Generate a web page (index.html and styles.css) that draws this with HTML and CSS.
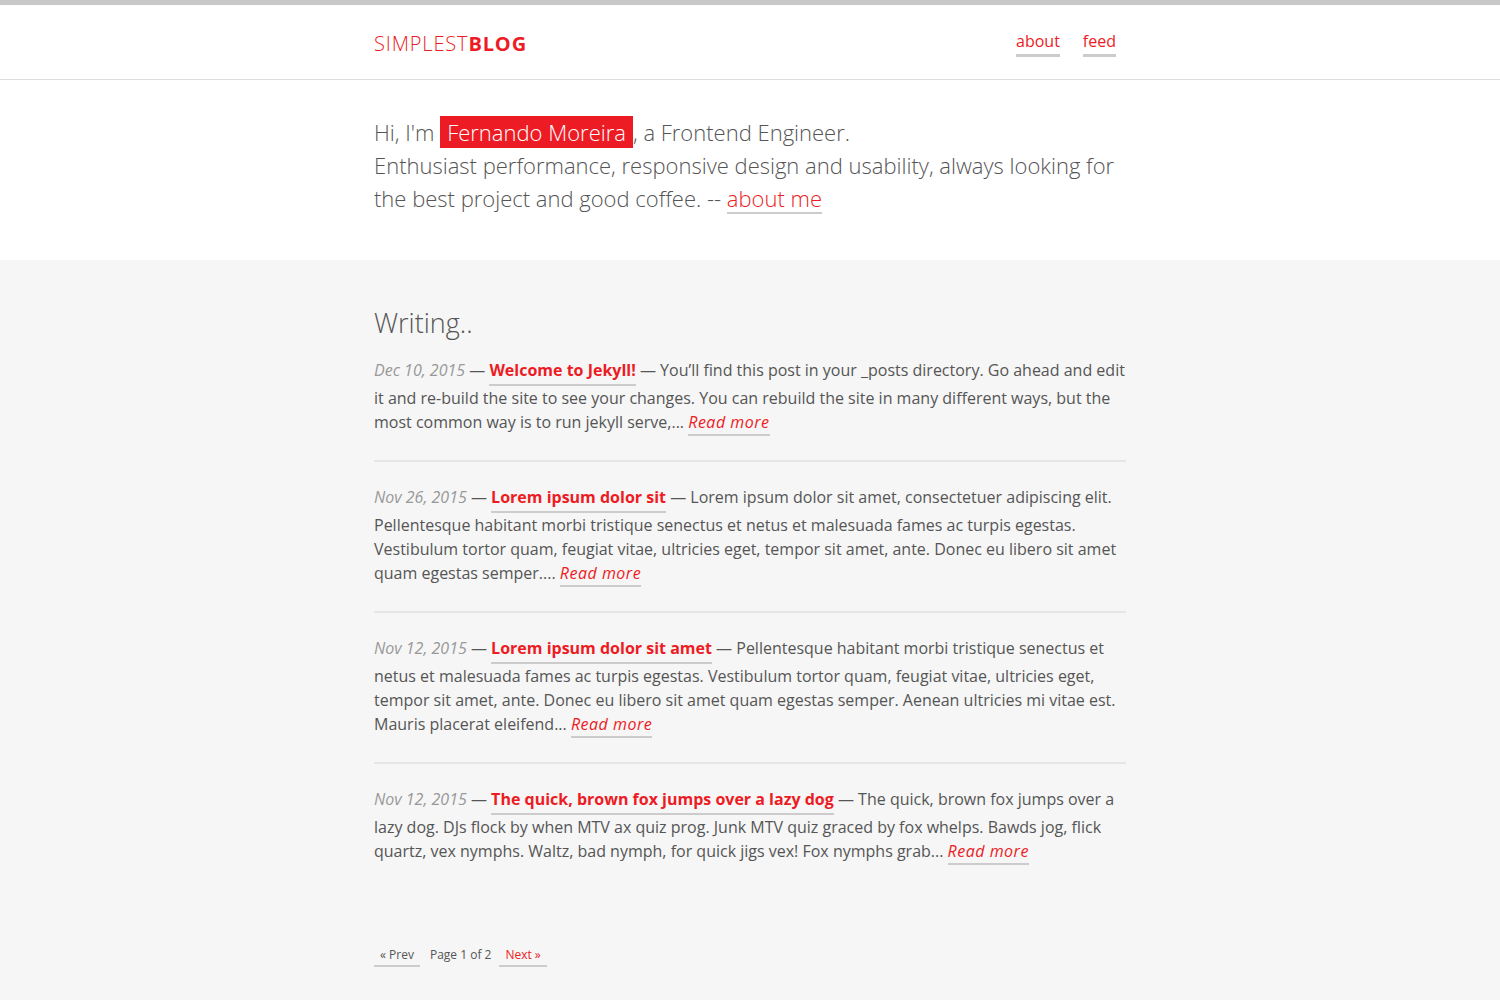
FILE: index.html
```html
<!DOCTYPE html>
<html lang="en">
<head>
<meta charset="utf-8">
<title>Simplest Blog</title>
<link rel="stylesheet" href="styles.css">
</head>
<body>
<header class="site-header">
  <div class="container header-inner">
    <a class="logo" href="#"><span class="logo-light">SIMPLEST</span><span class="logo-bold">BLOG</span></a>
    <nav class="nav">
      <a class="nav-link" href="#">about</a>
      <a class="nav-link" href="#">feed</a>
    </nav>
  </div>
</header>

<section class="hero">
  <div class="container">
    <p class="hero-text">Hi, I'm <span class="name">Fernando Moreira</span>, a Frontend Engineer.<br>Enthusiast performance, responsive design and usability, always looking for the best project and good coffee. -- <a class="hero-link" href="#">about me</a></p>
  </div>
</section>

<main class="content">
  <div class="container">
    <h2 class="section-title">Writing..</h2>

    <article class="post">
      <p class="post-text"><span class="date">Dec 10, 2015</span> — <a class="title" href="#">Welcome to Jekyll!</a> — You’ll find this post in your _posts directory. Go ahead and edit it and re-build the site to see your changes. You can rebuild the site in many different ways, but the most common way is to run jekyll serve,... <a class="more" href="#">Read more</a></p>
    </article>

    <article class="post">
      <p class="post-text"><span class="date">Nov 26, 2015</span> — <a class="title" href="#">Lorem ipsum dolor sit</a> — Lorem ipsum dolor sit amet, consectetuer adipiscing elit. Pellentesque habitant morbi tristique senectus et netus et malesuada fames ac turpis egestas. Vestibulum tortor quam, feugiat vitae, ultricies eget, tempor sit amet, ante. Donec eu libero sit amet quam egestas semper.... <a class="more" href="#">Read more</a></p>
    </article>

    <article class="post">
      <p class="post-text"><span class="date">Nov 12, 2015</span> — <a class="title" href="#">Lorem ipsum dolor sit amet</a> — Pellentesque habitant morbi tristique senectus et netus et malesuada fames ac turpis egestas. Vestibulum tortor quam, feugiat vitae, ultricies eget, tempor sit amet, ante. Donec eu libero sit amet quam egestas semper. Aenean ultricies mi vitae est. Mauris placerat eleifend... <a class="more" href="#">Read more</a></p>
    </article>

    <article class="post post-last">
      <p class="post-text"><span class="date">Nov 12, 2015</span> — <a class="title" href="#">The quick, brown fox jumps over a lazy dog</a> — The quick, brown fox jumps over a lazy dog. DJs flock by when MTV ax quiz prog. Junk MTV quiz graced by fox whelps. Bawds jog, flick quartz, vex nymphs. Waltz, bad nymph, for quick jigs vex! Fox nymphs grab... <a class="more" href="#">Read more</a></p>
    </article>

    <div class="pagination">
      <a class="page-link prev" href="#">« Prev</a>
      <span class="page-info">Page 1 of 2</span>
      <a class="page-link next" href="#">Next »</a>
    </div>
  </div>
</main>
</body>
</html>
```

FILE: styles.css
```css
* { box-sizing: border-box; }

html, body {
  margin: 0;
  padding: 0;
}

body {
  font-family: "Open Sans", "Liberation Sans", sans-serif;
  color: #555;
  background: #f6f6f6;
}

a { text-decoration: none; }

.container {
  width: 752px;
  margin: 0 auto;
}

.site-header {
  background: #fff;
  border-top: 5px solid #c8c8c8;
  border-bottom: 1px solid #ddd;
  height: 80px;
}

.header-inner {
  display: flex;
  align-items: center;
  justify-content: space-between;
  height: 74px;
  padding-top: 2px;
}

.logo {
  color: #ed1c24;
  font-size: 20px;
  letter-spacing: 0.85px;
  line-height: 1;
  margin-top: 2px;
}

.logo-light { font-weight: 300; }
.logo-bold { font-weight: 700; }

.nav {
  display: flex;
  gap: 23px;
  margin-right: 10px;
}

.nav-link {
  color: #ed1c24;
  font-size: 16px;
  line-height: 22px;
  border-bottom: 3px solid #ccc;
  padding-bottom: 2px;
}

.hero {
  background: #fff;
  padding: 36px 0 45px;
}

.hero-text {
  margin: 0;
  font-size: 22px;
  font-weight: 300;
  line-height: 33px;
  color: #555;
}

.name {
  background: #ed1c24;
  color: #fff;
  padding: 0 7px;
  display: inline-block;
  line-height: 32px;
}

.hero-link {
  color: #ed1c24;
  display: inline-block;
  line-height: 28px;
  border-bottom: 2px solid #ccc;
}

.content {
  padding: 43px 0 30px;
}

.section-title {
  margin: 0 0 15px;
  font-size: 27px;
  font-weight: 300;
  line-height: 40px;
  color: #555;
}

.post {
  border-bottom: 2px solid #e6e6e6;
  padding: 0 0 24px;
  margin-bottom: 23px;
}

.post-last {
  border-bottom: 0;
}

.post-text {
  margin: 0;
  font-size: 16px;
  line-height: 24px;
  color: #555;
}

.date {
  color: #999;
  font-style: italic;
}

.title {
  color: #ed1c24;
  font-weight: 700;
  display: inline-block;
  line-height: 24px;
  padding-bottom: 2px;
  border-bottom: 2px solid #ccc;
}

.more {
  color: #ed1c24;
  font-style: italic;
  letter-spacing: 0.5px;
  display: inline-block;
  line-height: 24px;
  padding-bottom: 0;
  border-bottom: 2px solid #ccc;
}

.pagination {
  margin-top: 57px;
  display: flex;
  align-items: baseline;
  font-size: 12px;
  line-height: 18px;
}

.page-link {
  padding: 0 6px 1px;
  border-bottom: 2px solid #ccc;
}

.prev { color: #555; }
.next { color: #ed1c24; }

.page-info {
  color: #555;
  margin: 0 8px 0 10px;
}
```
